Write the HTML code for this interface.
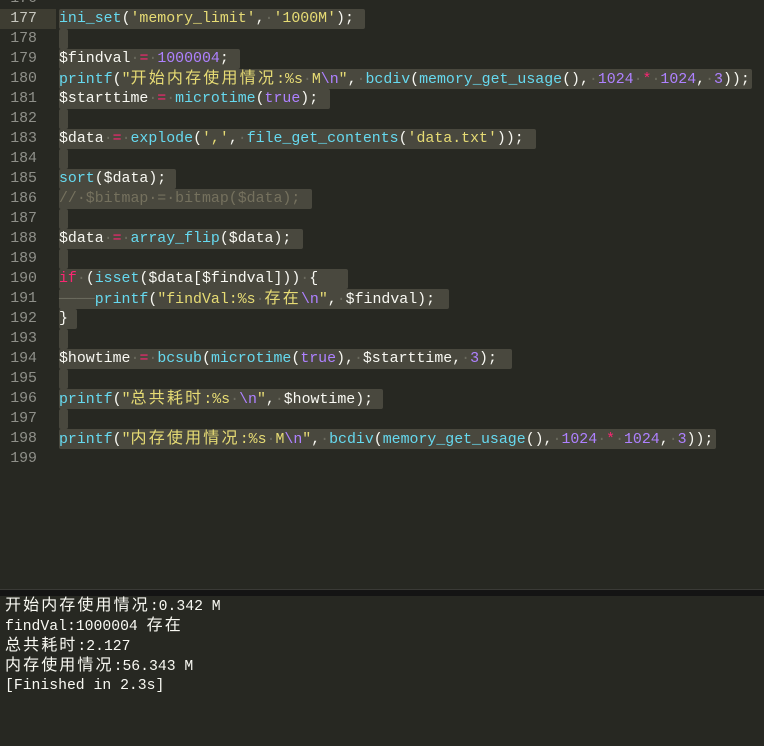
<!DOCTYPE html>
<html><head><meta charset="utf-8"><style>
body{margin:0;width:764px;height:746px;background:#272822;overflow:hidden;position:relative;font-family:"Liberation Mono","Noto Sans CJK SC",monospace;font-size:14.9px;}
.r{position:absolute;left:0;height:20px;line-height:20px;white-space:pre;}
.n{position:absolute;left:0;width:37px;text-align:right;color:#8f908a;font-size:14.9px}
.t{position:absolute;left:59px;color:#f8f8f2;}
.s{position:absolute;left:59px;height:20px;background:#49483e;border-radius:2px;}
.f{color:#66d9ef}.q{color:#e6db74}.m{color:#ae81ff}.o{color:#f92672}.c{color:#75715e}
.d{color:#6a6a5e}
.z{font-size:16px;letter-spacing:2.2px;}
#out{position:absolute;left:0;top:596px;width:764px;height:150px;background:#272822;color:#f8f8f2;font-size:14.75px}
#out .z{letter-spacing:2.1px}
#out div{position:absolute;left:5px;height:20px;line-height:20px;white-space:pre;}
</style></head><body>
<div style="position:absolute;left:0;top:9px;width:56px;height:20px;background:#3e3d32"></div>

<div class="s" style="top:9px;width:306px"></div>
<div class="s" style="top:29px;width:9px"></div>
<div class="s" style="top:49px;width:181px"></div>
<div class="s" style="top:69px;width:693px"></div>
<div class="s" style="top:89px;width:271px"></div>
<div class="s" style="top:109px;width:9px"></div>
<div class="s" style="top:129px;width:477px"></div>
<div class="s" style="top:149px;width:9px"></div>
<div class="s" style="top:169px;width:117px"></div>
<div class="s" style="top:189px;width:253px"></div>
<div class="s" style="top:209px;width:9px"></div>
<div class="s" style="top:229px;width:244px"></div>
<div class="s" style="top:249px;width:9px"></div>
<div class="s" style="top:269px;width:289px"></div>
<div class="s" style="top:289px;width:390px"></div>
<div class="s" style="top:309px;width:18px"></div>
<div class="s" style="top:329px;width:9px"></div>
<div class="s" style="top:349px;width:453px"></div>
<div class="s" style="top:369px;width:9px"></div>
<div class="s" style="top:389px;width:324px"></div>
<div class="s" style="top:409px;width:9px"></div>
<div class="s" style="top:429px;width:657px"></div>

<div class="r" style="top:-11px"><span class="n">176</span></div>
<div class="r" style="top:9px"><span class="n" style="color:#c8c8c0">177</span><span class="t"><span class="f">ini_set</span>(<span class="q">'memory_limit'</span>,<span class="d">·</span><span class="q">'1000M'</span>);</span></div>
<div class="r" style="top:29px"><span class="n">178</span></div>
<div class="r" style="top:49px"><span class="n">179</span><span class="t">$findval<span class="d">·</span><span class="o">=</span><span class="d">·</span><span class="m">1000004</span>;</span></div>
<div class="r" style="top:69px"><span class="n">180</span><span class="t"><span class="f">printf</span>(<span class="q">"<span class="z">开始内存使用情况</span>:%s<span class="d">·</span>M<span class="m">\n</span>"</span>,<span class="d">·</span><span class="f">bcdiv</span>(<span class="f">memory_get_usage</span>(),<span class="d">·</span><span class="m">1024</span><span class="d">·</span><span class="o">*</span><span class="d">·</span><span class="m">1024</span>,<span class="d">·</span><span class="m">3</span>));</span></div>
<div class="r" style="top:89px"><span class="n">181</span><span class="t">$starttime<span class="d">·</span><span class="o">=</span><span class="d">·</span><span class="f">microtime</span>(<span class="m">true</span>);</span></div>
<div class="r" style="top:109px"><span class="n">182</span></div>
<div class="r" style="top:129px"><span class="n">183</span><span class="t">$data<span class="d">·</span><span class="o">=</span><span class="d">·</span><span class="f">explode</span>(<span class="q">','</span>,<span class="d">·</span><span class="f">file_get_contents</span>(<span class="q">'data.txt'</span>));</span></div>
<div class="r" style="top:149px"><span class="n">184</span></div>
<div class="r" style="top:169px"><span class="n">185</span><span class="t"><span class="f">sort</span>($data);</span></div>
<div class="r" style="top:189px"><span class="n">186</span><span class="t c">//·$bitmap·=·bitmap($data);</span></div>
<div class="r" style="top:209px"><span class="n">187</span></div>
<div class="r" style="top:229px"><span class="n">188</span><span class="t">$data<span class="d">·</span><span class="o">=</span><span class="d">·</span><span class="f">array_flip</span>($data);</span></div>
<div class="r" style="top:249px"><span class="n">189</span></div>
<div class="r" style="top:269px"><span class="n">190</span><span class="t"><span class="o">if</span><span class="d">·</span>(<span class="f">isset</span>($data[$findval]))<span class="d">·</span>{</span></div>
<div class="r" style="top:289px"><span class="n">191</span><span class="t"><span class="d">────</span><span class="f">printf</span>(<span class="q">"findVal:%s<span class="d">·</span><span class="z">存在</span><span class="m">\n</span>"</span>,<span class="d">·</span>$findval);</span></div>
<div class="r" style="top:309px"><span class="n">192</span><span class="t">}</span></div>
<div class="r" style="top:329px"><span class="n">193</span></div>
<div class="r" style="top:349px"><span class="n">194</span><span class="t">$howtime<span class="d">·</span><span class="o">=</span><span class="d">·</span><span class="f">bcsub</span>(<span class="f">microtime</span>(<span class="m">true</span>),<span class="d">·</span>$starttime,<span class="d">·</span><span class="m">3</span>);</span></div>
<div class="r" style="top:369px"><span class="n">195</span></div>
<div class="r" style="top:389px"><span class="n">196</span><span class="t"><span class="f">printf</span>(<span class="q">"<span class="z">总共耗时</span>:%s<span class="d">·</span><span class="m">\n</span>"</span>,<span class="d">·</span>$howtime);</span></div>
<div class="r" style="top:409px"><span class="n">197</span></div>
<div class="r" style="top:429px"><span class="n">198</span><span class="t"><span class="f">printf</span>(<span class="q">"<span class="z">内存使用情况</span>:%s<span class="d">·</span>M<span class="m">\n</span>"</span>,<span class="d">·</span><span class="f">bcdiv</span>(<span class="f">memory_get_usage</span>(),<span class="d">·</span><span class="m">1024</span><span class="d">·</span><span class="o">*</span><span class="d">·</span><span class="m">1024</span>,<span class="d">·</span><span class="m">3</span>));</span></div>
<div class="r" style="top:449px"><span class="n">199</span></div>

<div style="position:absolute;left:0;top:589px;width:764px;height:1px;background:#3a3a36"></div>
<div style="position:absolute;left:0;top:590px;width:764px;height:6px;background:#141414"></div>
<div id="out">
<div style="top:0px"><span class="z">开始内存使用情况</span>:0.342 M</div>
<div style="top:20px">findVal:1000004 <span class="z">存在</span></div>
<div style="top:40px"><span class="z">总共耗时</span>:2.127</div>
<div style="top:60px"><span class="z">内存使用情况</span>:56.343 M</div>
<div style="top:80px">[Finished in 2.3s]</div>
</div>
</body></html>
